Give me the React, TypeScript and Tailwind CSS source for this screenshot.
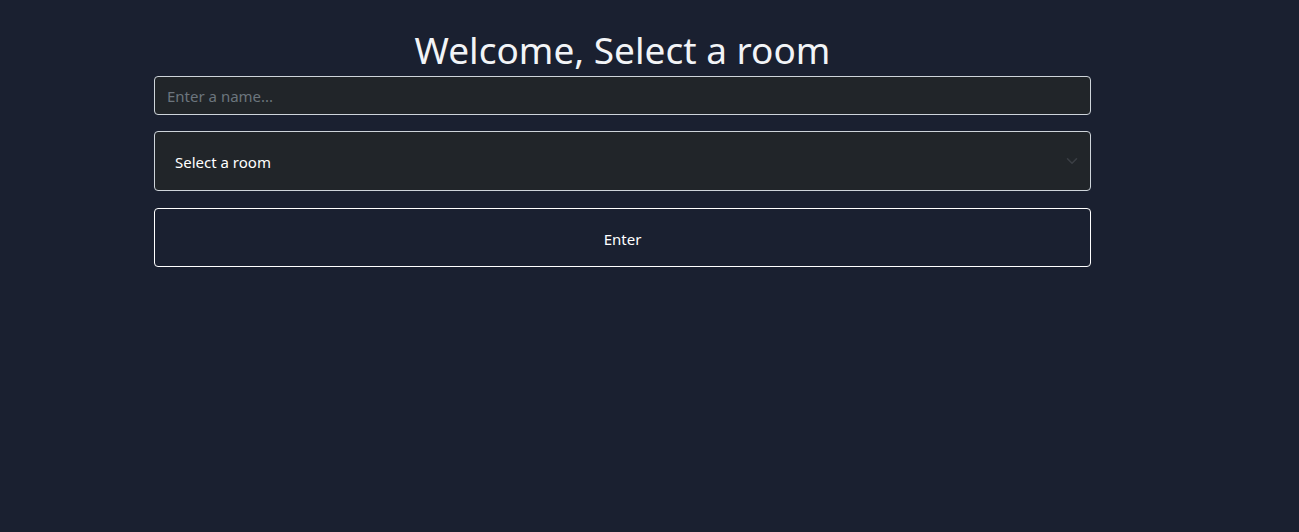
export default function App() {
  return (
    <div className="min-h-[532px] w-full bg-[#1a2030] font-['Noto_Sans','Open_Sans',sans-serif] text-white">
      <div className="ml-[154px] flex w-[937px] flex-col pt-[24px]">
        <h1 className="text-center text-[37px] leading-[52px] font-normal text-[#f2f4f7]">
          Welcome, Select a room
        </h1>
        <input
          type="text"
          placeholder="Enter a name..."
          className="h-[39px] rounded-[4px] border border-[#ced4da] bg-[#212529] px-[12px] text-[15px] text-white placeholder:text-[#6c757d] outline-none"
        />
        <div className="relative mt-[16px]">
          <select className="h-[60px] w-full appearance-none rounded-[4px] border border-[#ced4da] bg-[#212529] px-[20px] pt-[3px] text-[15px] text-white outline-none">
            <option>Select a room</option>
          </select>
          <svg
            className="pointer-events-none absolute right-[13px] top-[24px] h-[12px] w-[12px] text-[#3b3f45]"
            viewBox="0 0 16 16"
            fill="none"
            stroke="currentColor"
            strokeWidth={2}
            strokeLinecap="round"
            strokeLinejoin="round"
          >
            <path d="M2 5l6 6 6-6" />
          </svg>
        </div>
        <button className="mt-[17px] h-[59px] w-full rounded-[4px] border border-white bg-transparent pt-[3px] text-[15px] text-white">
          Enter
        </button>
      </div>
    </div>
  );
}
